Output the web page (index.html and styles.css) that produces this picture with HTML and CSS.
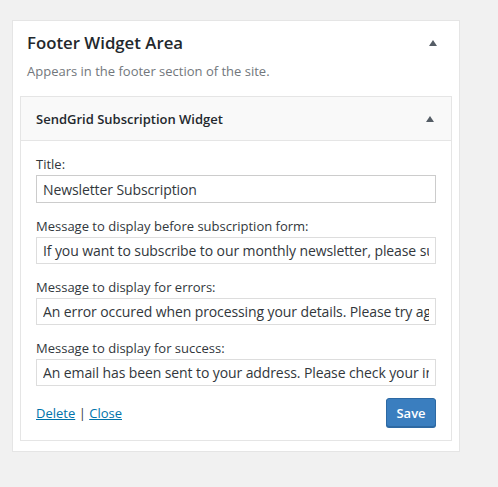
FILE: index.html
```html
<!DOCTYPE html>
<html>
<head>
<meta charset="utf-8">
<link rel="stylesheet" href="styles.css">
</head>
<body>
<div class="sidebar">
  <div class="sidebar-head">
    <h2 class="sidebar-name">Footer Widget Area</h2>
    <span class="arrow"></span>
  </div>
  <p class="sidebar-desc">Appears in the footer section of the site.</p>
  <div class="widget">
    <div class="widget-top">
      <h3 class="widget-title">SendGrid Subscription Widget</h3>
      <span class="arrow"></span>
    </div>
    <div class="widget-inside">
      <div class="field">
        <label class="field-label">Title:</label>
        <input class="field-input first" type="text" value="Newsletter Subscription">
      </div>
      <div class="field">
        <label class="field-label">Message to display before subscription form:</label>
        <input class="field-input" type="text" value="If you want to subscribe to our monthly newsletter, please submit the form below.">
      </div>
      <div class="field">
        <label class="field-label">Message to display for errors:</label>
        <input class="field-input" type="text" value="An error occured when processing your details. Please try again.">
      </div>
      <div class="field">
        <label class="field-label">Message to display for success:</label>
        <input class="field-input" type="text" value="An email has been sent to your address. Please check your inbox.">
      </div>
      <div class="controls">
        <div class="links"><a href="#">Delete</a> <span class="sep">|</span> <a href="#">Close</a></div>
        <button class="save" type="button">Save</button>
      </div>
    </div>
  </div>
</div>
</body>
</html>
```
FILE: styles.css
```css
html, body {
  margin: 0;
  padding: 0;
  background: #f1f1f1;
  font-family: "Open Sans", "Liberation Sans", sans-serif;
}
body {
  padding: 20px 0 0 12px;
}
.sidebar {
  width: 432px;
  background: #fff;
  border: 1px solid #e5e5e5;
  padding: 0 7px 10px 7px;
}
.sidebar-head {
  display: flex;
  align-items: center;
  justify-content: space-between;
  padding: 10px 15px 0 7px;
}
.sidebar-name {
  margin: 0;
  font-size: 16.8px;
  line-height: 24px;
  font-weight: 600;
  color: #23282d;
}
.arrow {
  width: 0;
  height: 0;
  border-left: 4px solid transparent;
  border-right: 4px solid transparent;
  border-bottom: 6px solid #555d66;
}
.sidebar-desc {
  margin: 6px 0 0 7px;
  font-size: 13px;
  line-height: 20px;
  color: #72777c;
}
.widget {
  margin-top: 15px;
  border: 1px solid #e5e5e5;
  background: #fff;
}
.widget-top {
  height: 43px;
  background: #f9f9f9;
  border-bottom: 1px solid #e5e5e5;
  display: flex;
  align-items: center;
  justify-content: space-between;
  padding: 0 17px 0 15px;
}
.widget-title {
  margin: 0;
  font-size: 13px;
  font-weight: 600;
  color: #23282d;
}
.widget-inside {
  padding: 14px 15px 13px 15px;
}
.field {
  margin-bottom: 14px;
}
.field-label {
  display: block;
  font-size: 13px;
  line-height: 18px;
  color: #32373c;
  margin-bottom: 2px;
}
.field-input {
  display: block;
  box-sizing: border-box;
  width: 400px;
  height: 27px;
  margin: 0;
  padding: 0 6px;
  border: 1px solid #ddd;
  background: #fff;
  font-family: "Open Sans", "Liberation Sans", sans-serif;
  font-size: 14px;
  letter-spacing: -0.1px;
  color: #32373c;
  outline: none;
}
.field-input.first {
  height: 28px;
  border-color: #ccc;
}
.controls {
  display: flex;
  align-items: center;
  justify-content: space-between;
  margin-top: -2px;
}
.links {
  font-size: 13px;
  color: #32373c;
}
.links a {
  color: #0073aa;
  text-decoration: underline;
}
.save {
  width: 50px;
  height: 29px;
  padding: 0;
  background: #3a7ebf;
  border: 1px solid #2d69a3;
  border-radius: 3px;
  color: #fff;
  font-family: "Open Sans", "Liberation Sans", sans-serif;
  font-size: 13px;
  font-weight: 600;
  box-shadow: 0 1px 0 #2d69a3;
}
```
